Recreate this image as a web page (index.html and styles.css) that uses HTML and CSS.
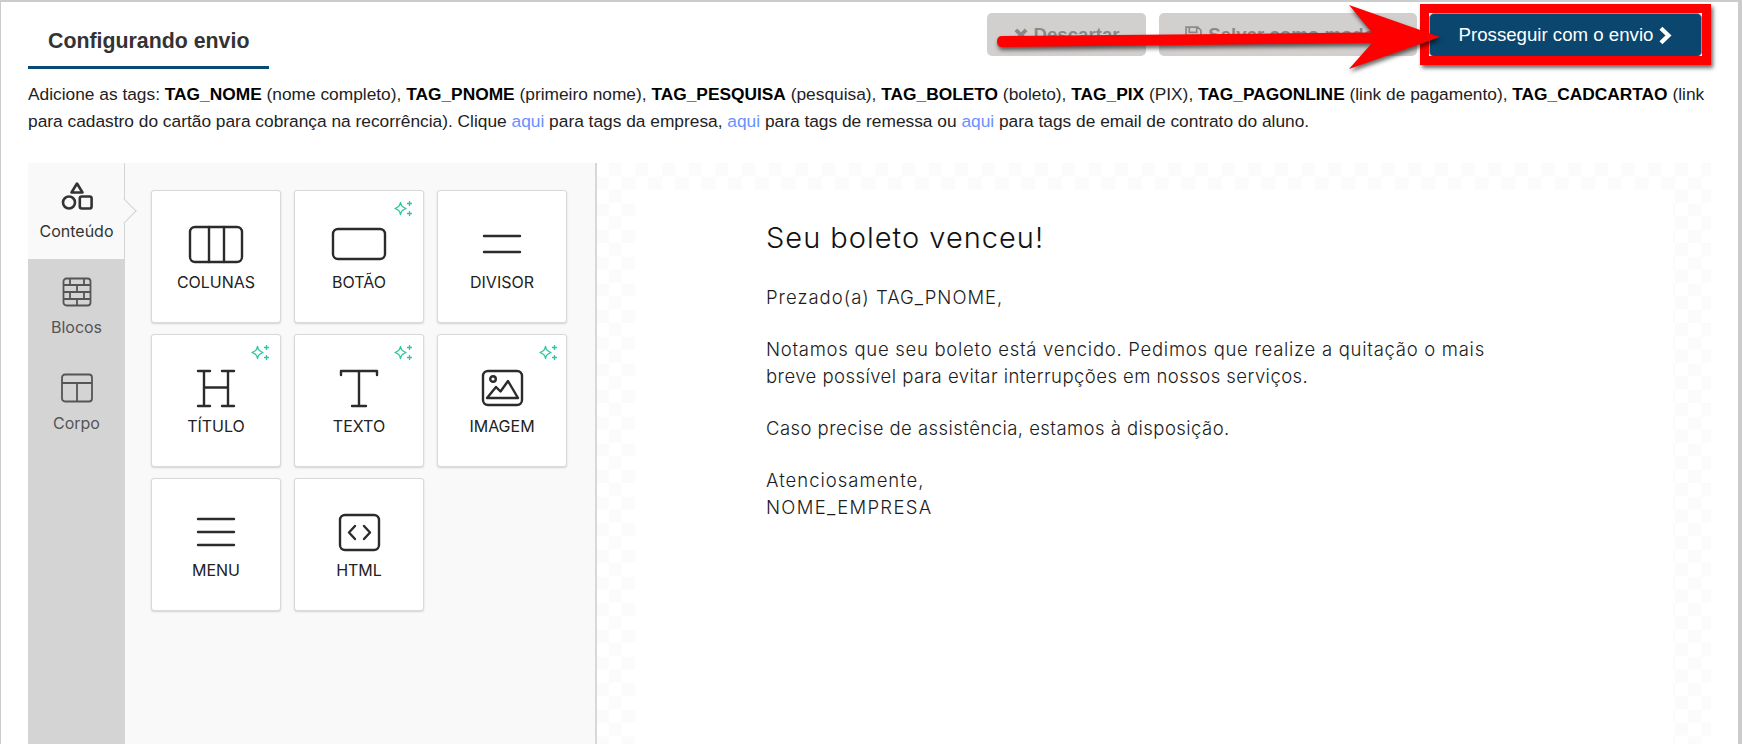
FILE: index.html
```html
<!DOCTYPE html>
<html lang="pt-BR">
<head>
<meta charset="utf-8">
<title>Configurando envio</title>
<link rel="stylesheet" href="styles.css">
</head>
<body>
<div class="page">
  <header class="topbar">
    <h1 class="tab-title">Configurando envio</h1>
    <div class="actions">
      <button class="btn btn-muted btn-discard">
        <svg class="btn-icon" viewBox="0 0 14 14"><path d="M2.5 2.5l9 9M11.5 2.5l-9 9" fill="none" stroke="currentColor" stroke-width="3.4"/></svg>
        Descartar
      </button>
      <button class="btn btn-muted btn-save">
        <svg class="btn-icon" viewBox="0 0 16 16"><path d="M1 1h11l3 3v11H1zM4 1v5h7V1M3.500 9h9v6h-9z" fill="none" stroke="currentColor" stroke-width="1.600"/></svg>
        Salvar como modelo
      </button>
      <button class="btn btn-primary">
        Prosseguir com o envio
        <svg class="chevron" viewBox="0 0 12 16"><path d="M2.500 1.800L9 8l-6.500 6.200" fill="none" stroke="currentColor" stroke-width="3.600"/></svg>
      </button>
    </div>
  </header>

  <p class="tags">Adicione as tags: <b>TAG_NOME</b> (nome completo), <b>TAG_PNOME</b> (primeiro nome), <b>TAG_PESQUISA</b> (pesquisa), <b>TAG_BOLETO</b> (boleto), <b>TAG_PIX</b> (PIX), <b>TAG_PAGONLINE</b> (link de pagamento), <b>TAG_CADCARTAO</b> (link para cadastro do cartão para cobrança na recorrência). Clique <a href="#">aqui</a> para tags da empresa, <a href="#">aqui</a> para tags de remessa ou <a href="#">aqui</a> para tags de email de contrato do aluno.</p>

  <main class="editor">
    <nav class="side-tabs">
      <div class="side-tab active">
        <svg class="side-icon" viewBox="0 0 32 32"><path d="M16 3.500l5.500 9h-11z" fill="none" stroke="currentColor" stroke-width="2.600" stroke-linejoin="round"/><circle cx="8" cy="22.500" r="6" fill="none" stroke="currentColor" stroke-width="2.600"/><rect x="18.800" y="16.500" width="11.800" height="12" rx="2" fill="none" stroke="currentColor" stroke-width="2.600"/></svg>
        <span>Conteúdo</span>
      </div>
      <div class="side-tab">
        <svg class="side-icon" viewBox="0 0 32 32"><g fill="none" stroke="currentColor" stroke-width="1.800"><rect x="2.500" y="2.500" width="27" height="27" rx="3"/><path d="M2.500 9h27M2.500 16h27M2.500 23h27M9 2.500V9M23 2.500V9M16 9v7M9 16v7M23 16v7M16 23v6.500"/></g></svg>
        <span>Blocos</span>
      </div>
      <div class="side-tab">
        <svg class="side-icon" viewBox="0 0 32 32"><g fill="none" stroke="currentColor" stroke-width="1.800"><rect x="1" y="2.500" width="30" height="27" rx="3"/><path d="M1 11h30M16 11v18.500"/></g></svg>
        <span>Corpo</span>
      </div>
    </nav>

    <section class="tools">
      <div class="tool">
        <svg class="tool-icon" viewBox="0 0 56 56"><rect x="2" y="11" width="52" height="35" rx="5"/><path d="M21 11v35M36 11v35"/></svg>
        <span>COLUNAS</span>
      </div>
      <div class="tool">
        <svg class="sparkle" viewBox="0 0 20 20"><path d="M7.500 3.500C8.200 7 9 7.800 13 9.500 9 11.200 8.200 12 7.500 15.500 6.800 12 6 11.200 2 9.500 6 7.800 6.800 7 7.500 3.500zM16.500 2v5M14 4.500h5M16.500 12v5M14 14.500h5"/></svg>
        <svg class="tool-icon" viewBox="0 0 56 56"><rect x="2" y="13" width="52" height="30" rx="5"/></svg>
        <span>BOTÃO</span>
      </div>
      <div class="tool">
        <svg class="tool-icon" viewBox="0 0 56 56"><path d="M10 20h36M10 36h36"/></svg>
        <span>DIVISOR</span>
      </div>
      <div class="tool">
        <svg class="sparkle" viewBox="0 0 20 20"><path d="M7.500 3.500C8.200 7 9 7.800 13 9.500 9 11.200 8.200 12 7.500 15.500 6.800 12 6 11.200 2 9.500 6 7.800 6.800 7 7.500 3.500zM16.500 2v5M14 4.500h5M16.500 12v5M14 14.500h5"/></svg>
        <svg class="tool-icon" viewBox="0 0 56 56"><path d="M10 11h12M34 11h12M16 11v35M40 11v35M10 46h12M34 46h12M16 27.500h24"/></svg>
        <span>TÍTULO</span>
      </div>
      <div class="tool">
        <svg class="sparkle" viewBox="0 0 20 20"><path d="M7.500 3.500C8.200 7 9 7.800 13 9.500 9 11.200 8.200 12 7.500 15.500 6.800 12 6 11.200 2 9.500 6 7.800 6.800 7 7.500 3.500zM16.500 2v5M14 4.500h5M16.500 12v5M14 14.500h5"/></svg>
        <svg class="tool-icon" viewBox="0 0 56 56"><path d="M10 15v-4h36v4M28 11v35M21 46h14"/></svg>
        <span>TEXTO</span>
      </div>
      <div class="tool">
        <svg class="sparkle sparkle-wide" viewBox="0 0 20 20"><path d="M7.500 3.500C8.200 7 9 7.800 13 9.500 9 11.200 8.200 12 7.500 15.500 6.800 12 6 11.200 2 9.500 6 7.800 6.800 7 7.500 3.500zM16.500 2v5M14 4.500h5M16.500 12v5M14 14.500h5"/></svg>
        <svg class="tool-icon" viewBox="0 0 56 56"><rect x="9" y="11" width="39" height="34" rx="5"/><circle cx="19" cy="19" r="2.800"/><path d="M13 38l9-11 4.500 4.500L34 21l10 17z" stroke-linejoin="round"/></svg>
        <span>IMAGEM</span>
      </div>
      <div class="tool">
        <svg class="tool-icon" viewBox="0 0 56 56"><path d="M10 15h36M10 28h36M10 41h36"/></svg>
        <span>MENU</span>
      </div>
      <div class="tool">
        <svg class="tool-icon" viewBox="0 0 56 56"><rect x="9" y="11" width="39" height="35" rx="5"/><path d="M24 22l-6 6.500 6 6.500M33 22l6 6.500-6 6.500"/></svg>
        <span>HTML</span>
      </div>
    </section>

    <section class="canvas">
      <div class="checker">
        <article class="email">
          <h2>Seu boleto venceu!</h2>
          <p class="fit-mid">Prezado(a) TAG_PNOME,</p>
          <p>Notamos que seu boleto está vencido. Pedimos que realize a quitação o mais<br><span class="fit-tight">breve possível para evitar interrupções em nossos serviços.</span></p>
          <p class="fit-tight">Caso precise de assistência, estamos à disposição.</p>
          <p><span class="fit-mid">Atenciosamente,</span><br><span class="fit-wide">NOME_EMPRESA</span></p>
        </article>
      </div>
    </section>
  </main>

  <div class="callout-box"></div>
  <svg class="callout-arrow" viewBox="0 0 1742 80" aria-hidden="true">
    <path d="M1002 36L1372 32.500 1349 5 1440 37 1349 69 1372 43 1002 47Q997 47 997 41.500 997 36 1002 36z" fill="#f00"/>
  </svg>
</div>
</body>
</html>
```
FILE: styles.css
```css
* { box-sizing: border-box; }
html, body { margin: 0; height: 100%; }
body { background: #fff; overflow: hidden; }

.page {
  position: relative;
  height: 744px;
  display: flex;
  flex-direction: column;
  border-top: 2px solid #ccc;
  border-left: 1px solid #ccc;
  border-right: 4px solid #ccc;
  font-family: "Liberation Sans", Arial, sans-serif;
  overflow: hidden;
}

.topbar {
  display: flex;
  justify-content: space-between;
  padding: 0 36px 0 27px;
  height: 67px;
  flex: none;
}

.tab-title {
  margin: 0;
  width: 241px;
  height: 67px;
  padding: 27px 0 0 20px;
  border-bottom: 3px solid #0b4a75;
  font-size: 21.330px;
  line-height: 24px;
  font-weight: 700;
  color: #333;
}

.actions { display: flex; gap: 12px; padding-top: 11px; }

.btn {
  height: 43px;
  border-radius: 5px;
  border: 1px solid transparent;
  font-family: inherit;
  font-size: 18.670px;
  display: flex;
  align-items: center;
  justify-content: center;
  gap: 6px;
  padding: 0;
}

.btn-muted { background: #d2d0cf; color: #8a8a8a; font-weight: 700; }
.btn-discard { width: 159px; gap: 4px; }
.btn-save { width: 258px; margin-left: 1px; }
.btn-icon { width: 16px; height: 16px; }
.btn-save .btn-icon { width: 17px; height: 17px; }

.btn-primary {
  width: 273px;
  height: 44px;
  background: #0a466e;
  border-color: #7f97a8;
  color: #fff;
  gap: 5px;
}
.chevron { width: 14px; height: 19px; }

.tags {
  margin: 0;
  padding: 12px 18px 0 27px;
  font-size: 17.330px;
  line-height: 27px;
  color: #222;
  height: 94px;
  flex: none;
}
.tags b { color: #000; }
.tags a { color: #6a8fff; text-decoration: none; }

.editor { flex: 1; display: flex; padding-left: 27px; min-height: 0; }

.side-tabs { width: 97px; background: #d4d4d4; flex: none; }
.side-tab {
  position: relative;
  height: 96px;
  display: flex;
  flex-direction: column;
  align-items: center;
  padding-top: 17px;
  color: #555;
  font: 16px/20px Inter, sans-serif;
}
.side-icon { width: 32px; height: 32px; margin-bottom: 9px; color: inherit; }
.side-tab.active {
  background: #f9f9f9;
  color: #333;
  border-right: 1px solid #d4d4d4;
  padding-left: 1px;
}
.side-tab.active::after {
  content: "";
  position: absolute;
  right: -9px;
  top: 39px;
  width: 17px;
  height: 17px;
  background: #f9f9f9;
  border-top: 1px solid #d4d4d4;
  border-right: 1px solid #d4d4d4;
  transform: rotate(45deg);
}

.tools {
  width: 472px;
  flex: none;
  background: #f9f9f9;
  border-right: 2px solid #d8d8d8;
  padding: 27px 0 0 26px;
  display: grid;
  grid-template-columns: repeat(3, 130px);
  grid-auto-rows: 133px;
  column-gap: 13px;
  row-gap: 11px;
  align-content: start;
}

.tool {
  position: relative;
  background: #fff;
  border: 1px solid #d9d9d9;
  border-radius: 3px;
  box-shadow: 0 1px 2px rgba(0, 0, 0, .15);
  display: flex;
  flex-direction: column;
  align-items: center;
  padding-top: 25px;
  font: 16px/18px Inter, sans-serif;
  color: #222;
}
.tool-icon {
  width: 56px;
  height: 56px;
  margin-bottom: 1px;
  fill: none;
  stroke: #2b2b2b;
  stroke-width: 2.400;
  stroke-linecap: round;
  stroke-linejoin: round;
}
.sparkle {
  position: absolute;
  top: 8px;
  right: 10px;
  width: 20px;
  height: 20px;
  fill: none;
  stroke: #2cc79f;
  stroke-width: 1.300;
  stroke-linejoin: round;
}
.sparkle-wide { right: 8px; }

.canvas { flex: 1; padding-right: 27px; background: #fff; }
.checker {
  height: 100%;
  padding: 27px 38px 0;
  background: conic-gradient(#fbfbfb 25%, #fff 0 50%, #fbfbfb 0 75%, #fff 0) -2px 0 / 26.670px 26.670px;
}
.email {
  height: 100%;
  background: #fff;
  padding: 28px 0 0 131px;
  font-family: Inter, sans-serif;
  font-weight: 300;
  font-size: 18.500px;
  letter-spacing: .72px;
  line-height: 26.200px;
  color: #1c1c1c;
}
.email h2 { margin: 0 0 26px; font-size: 29px; letter-spacing: 1px; line-height: 40px; font-weight: 300; color: #111; }
.email p { margin: 0 0 26.200px; }
.email .fit-tight { letter-spacing: .45px; }
.email .fit-mid { letter-spacing: 1px; }
.email .fit-wide { letter-spacing: 1.300px; }

.callout-box {
  position: absolute;
  left: 1419px;
  top: 2px;
  width: 291px;
  height: 61px;
  border: 9px solid #f00;
  box-shadow: 2px 3px 4px rgba(0, 0, 0, .6);
}
.callout-arrow {
  position: absolute;
  left: -1px;
  top: -2px;
  width: 1742px;
  height: 80px;
  filter: drop-shadow(1px 3px 2px rgba(0, 0, 0, .6));
}
```
